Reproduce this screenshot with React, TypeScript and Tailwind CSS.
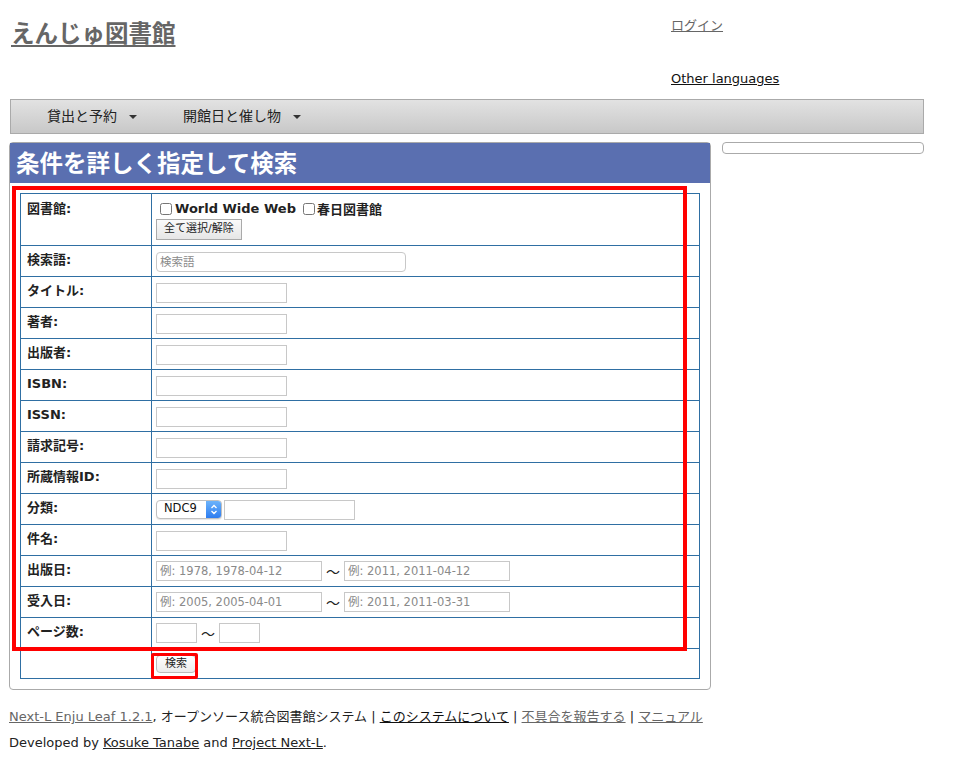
import React from "react";

const FONT = '"DejaVu Sans", "Noto Sans CJK JP", sans-serif';

function TextInput({ w, placeholder, rounded }: { w: string; placeholder?: string; rounded?: boolean }) {
  return (
    <input
      type="text"
      placeholder={placeholder}
      className={`${w} h-[20px] border border-[#c8c8c8] bg-white px-[3px] text-[11.5px] text-[#333] placeholder:text-[#8a8a8a] outline-none ${rounded ? "rounded-[4px]" : ""}`}
      style={{ fontFamily: FONT }}
    />
  );
}

function Row({ label, children }: { label: string; children?: React.ReactNode }) {
  return (
    <tr className="h-[31px]">
      <td className="w-[131px] border border-[#2f6fa3] pl-[6px] align-top pt-[4px] text-[13px] leading-[19px] font-bold text-[#222]">{label}</td>
      <td className="border border-[#2f6fa3] pl-[4px] align-middle">{children}</td>
    </tr>
  );
}

function Caret() {
  return <span className="inline-block ml-[12px] align-middle w-0 h-0 border-l-[4px] border-r-[4px] border-t-[4px] border-l-transparent border-r-transparent border-t-[#333]" />;
}

function Tilde() {
  return <span className="mx-[4px] text-[14px] w-[14px] text-center" style={{ fontFamily: '"Noto Sans CJK JP", sans-serif' }}>〜</span>;
}

export default function App() {
  return (
    <div className="relative w-[954px] min-h-[761px] bg-white text-[#222]" style={{ fontFamily: FONT }}>
      {/* header */}
      <div className="flex h-[99px]">
        <div className="w-[671px] pl-[11px] pt-[15px]">
          <a className="text-[23.5px] font-bold text-[#666] underline underline-offset-[3px] decoration-[2px]" style={{ fontFamily: '"Noto Sans CJK JP", sans-serif' }}>えんじゅ図書館</a>
        </div>
        <div className="flex flex-col pt-[16px] text-[13px]">
          <a className="text-[#666] underline">ログイン</a>
          <a className="mt-[33px] text-[#111] underline">Other languages</a>
        </div>
      </div>

      {/* nav */}
      <div className="ml-[10px] w-[914px] h-[35px] border border-[#aaa] bg-gradient-to-b from-[#e2e2e2] to-[#c8c8c8] flex items-center text-[14px] text-[#222]">
        <div className="pl-[36px] flex items-center">貸出と予約<Caret /></div>
        <div className="pl-[46px] flex items-center">開館日と催し物<Caret /></div>
      </div>

      {/* main */}
      <div className="flex mt-[8px]">
        <div className="ml-[9px] w-[702px] border border-[#aaa] rounded-[4px] bg-white">
          <div className="h-[40px] bg-[#5a6fb0] pl-[6px] flex items-center text-[23.5px] font-bold text-white" style={{ fontFamily: '"Noto Sans CJK JP", sans-serif' }}>
            条件を詳しく指定して検索
          </div>
          <div className="px-[10px] pt-[10px] pb-[10px]">
            <table className="w-[680px] border-collapse border border-[#2f6fa3]">
              <tbody>
                <tr className="h-[52px]">
                  <td className="w-[131px] border border-[#2f6fa3] pl-[6px] align-top pt-[5px] text-[13px] leading-[19px] font-bold text-[#222]">図書館:</td>
                  <td className="border border-[#2f6fa3] pl-[4px] align-top pt-[5px]">
                    <div className="flex items-center h-[20px] text-[13px] font-bold text-[#222]">
                      <input type="checkbox" className="w-[12px] h-[12px] m-0 ml-[4px] mr-[3px]" />
                      <span>World Wide Web</span>
                      <input type="checkbox" className="w-[12px] h-[12px] m-0 ml-[7px] mr-[2px]" />
                      <span style={{ fontFamily: '"Noto Sans CJK JP", sans-serif' }}>春日図書館</span>
                    </div>
                    <button className="block h-[21px] px-[7px] border border-[#aaa] bg-gradient-to-b from-[#fafafa] to-[#e6e6e6] text-[11px] text-[#222]">全て選択/解除</button>
                  </td>
                </tr>
                <Row label="検索語:"><TextInput w="w-[250px]" placeholder="検索語" rounded /></Row>
                <Row label="タイトル:"><TextInput w="w-[131px]" /></Row>
                <Row label="著者:"><TextInput w="w-[131px]" /></Row>
                <Row label="出版者:"><TextInput w="w-[131px]" /></Row>
                <Row label="ISBN:"><TextInput w="w-[131px]" /></Row>
                <Row label="ISSN:"><TextInput w="w-[131px]" /></Row>
                <Row label="請求記号:"><TextInput w="w-[131px]" /></Row>
                <Row label="所蔵情報ID:"><TextInput w="w-[131px]" /></Row>
                <Row label="分類:">
                  <div className="flex items-center">
                    <div className="w-[66px] h-[19px] rounded-[4px] border border-[#c0c0c0] bg-white flex items-center overflow-hidden shadow-[0_1px_1px_rgba(0,0,0,0.1)]">
                      <span className="flex-1 pl-[7px] text-[11.5px] text-[#111]">NDC9</span>
                      <span className="w-[15px] h-full bg-gradient-to-b from-[#6cb3fa] to-[#2d7cf0] flex items-center justify-center">
                        <svg width="8" height="11" viewBox="0 0 8 11"><path d="M1.5 4 L4 1.5 L6.5 4 M1.5 7 L4 9.5 L6.5 7" fill="none" stroke="white" strokeWidth="1.3" /></svg>
                      </span>
                    </div>
                    <div className="ml-[2px]"><TextInput w="w-[131px]" /></div>
                  </div>
                </Row>
                <Row label="件名:"><TextInput w="w-[131px]" /></Row>
                <Row label="出版日:">
                  <div className="flex items-center">
                    <TextInput w="w-[166px]" placeholder="例: 1978, 1978-04-12" />
                    <Tilde />
                    <TextInput w="w-[166px]" placeholder="例: 2011, 2011-04-12" />
                  </div>
                </Row>
                <Row label="受入日:">
                  <div className="flex items-center">
                    <TextInput w="w-[166px]" placeholder="例: 2005, 2005-04-01" />
                    <Tilde />
                    <TextInput w="w-[166px]" placeholder="例: 2011, 2011-03-31" />
                  </div>
                </Row>
                <Row label="ページ数:">
                  <div className="flex items-center">
                    <TextInput w="w-[41px]" />
                    <Tilde />
                    <TextInput w="w-[41px]" />
                  </div>
                </Row>
                <tr className="h-[30px]">
                  <td className="border border-[#2f6fa3]"></td>
                  <td className="border border-[#2f6fa3] pl-[4px] align-middle">
                    <button className="block h-[18px] px-[8px] rounded-[4px] border border-[#bbb] bg-gradient-to-b from-[#ffffff] to-[#ececec] text-[11px] text-[#222]">検索</button>
                  </td>
                </tr>
              </tbody>
            </table>
          </div>
        </div>
        <div className="ml-[11px] w-[202px] h-[12px] border border-[#aaa] rounded-[4px]" />
      </div>

      {/* footer */}
      <div className="pl-[9px] pt-[18px] text-[13px] text-[#222] leading-[18px]">
        <div>
          <a className="text-[#666] underline">Next-L Enju Leaf 1.2.1</a>, オープンソース統合図書館システム | <a className="text-[#111] underline">このシステムについて</a> | <a className="text-[#666] underline">不具合を報告する</a> | <a className="text-[#666] underline">マニュアル</a>
        </div>
        <div className="mt-[8px]">
          Developed by <a className="underline">Kosuke Tanabe</a> and <a className="underline">Project Next-L</a>.
        </div>
      </div>

      {/* annotation boxes */}
      <div className="absolute left-[12px] top-[186px] w-[675px] h-[465px] border-[4px] border-[#ff0000] pointer-events-none" />
      <div className="absolute left-[151px] top-[653px] w-[47px] h-[26px] border-[3px] border-[#ff0000] rounded-[2px] pointer-events-none" />
    </div>
  );
}
